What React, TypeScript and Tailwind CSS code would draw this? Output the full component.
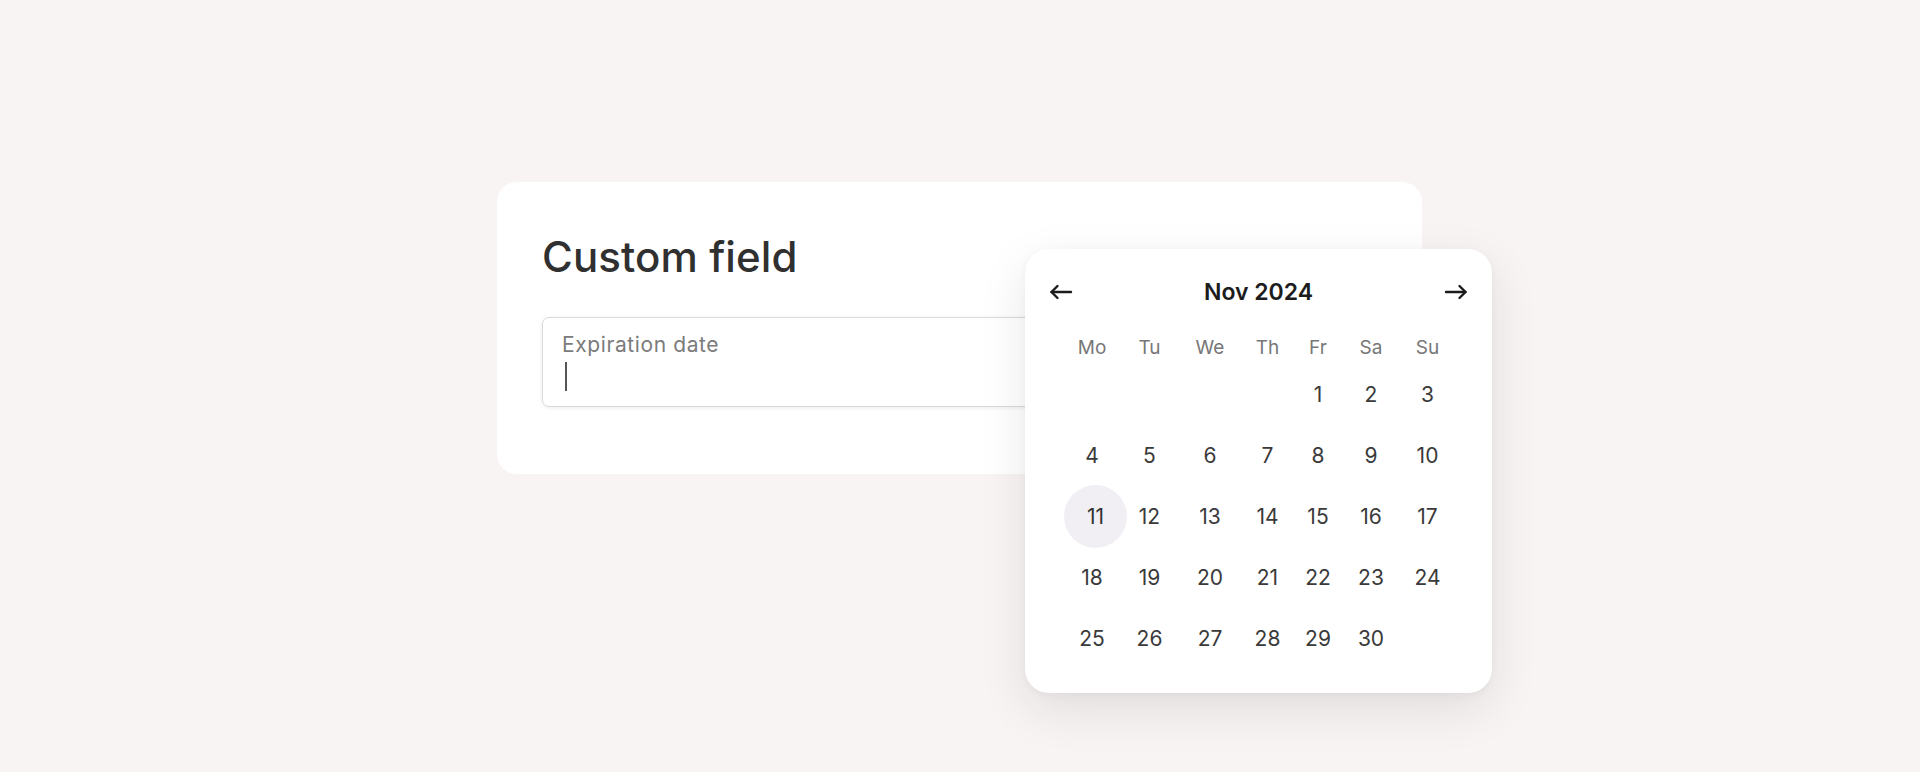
import React from "react";

const weekdays = ["Mo", "Tu", "We", "Th", "Fr", "Sa", "Su"];
const days: (number | null)[] = [
  null, null, null, null, 1, 2, 3,
  4, 5, 6, 7, 8, 9, 10,
  11, 12, 13, 14, 15, 16, 17,
  18, 19, 20, 21, 22, 23, 24,
  25, 26, 27, 28, 29, 30, null,
];

function Arrow({ dir }: { dir: "left" | "right" }) {
  return (
    <svg
      width="24"
      height="16"
      viewBox="0 0 24 16"
      fill="none"
      stroke="#1c1c1c"
      strokeWidth="2.4"
      strokeLinecap="round"
      strokeLinejoin="round"
      className={dir === "right" ? "rotate-180" : ""}
    >
      <path d="M22 8H2.5" />
      <path d="M8.5 2L2.5 8l6 6" />
    </svg>
  );
}

export default function App() {
  return (
    <div
      className="min-h-[772px] w-full bg-[#f7f4f3] pt-[182px] pl-[497px]"
      style={{ fontFamily: "Inter, 'Noto Sans', sans-serif" }}
    >
      <div className="relative w-[925px] h-[292px] rounded-[20px] bg-white pl-[45px] pr-[45px] pt-[48px]">
        <h1 className="text-[42px] leading-[54px] font-medium text-[#303030] tracking-[0.1px]">
          Custom field
        </h1>
        <div className="mt-[33px] h-[90px] rounded-[7px] border border-[#dadada] bg-white shadow-[0_1px_4px_rgba(0,0,0,0.08)] pl-[19px] pt-[13px]">
          <div className="text-[21px] leading-[28px] tracking-[0.6px] text-[#7b7b7b]">Expiration date</div>
          <div className="mt-[3px] ml-[3px] w-[2px] h-[29px] bg-[#555]" />
        </div>

        <div className="absolute left-[528px] top-[67px] w-[467px] h-[444px] rounded-[24px] bg-white shadow-[0_16px_48px_rgba(40,30,30,0.10),0_2px_8px_rgba(0,0,0,0.04)]">
          <div className="flex items-center justify-between h-[40px] mt-[23px] px-[24px]">
            <Arrow dir="left" />
            <div className="text-[23px] font-semibold text-[#1c1c1c]">Nov 2024</div>
            <Arrow dir="right" />
          </div>
          <div className="ml-[38px] mt-[20px] grid grid-cols-[58px_57px_64px_51px_50px_56px_57px]">
            {weekdays.map((w) => (
              <div
                key={w}
                className="h-[32px] flex items-center justify-center text-[19px] text-[#777]"
              >
                {w}
              </div>
            ))}
            {days.map((d, i) => (
              <div key={i} className="h-[61px] flex items-center justify-center">
                {d !== null && (
                  <span
                    className={
                      d === 11
                        ? "shrink-0 ml-[7px] w-[63px] h-[63px] rounded-full bg-[#f1eff3] flex items-center justify-center text-[21px] text-[#333]"
                        : "text-[21px] text-[#3a3a3a]"
                    }
                  >
                    {d}
                  </span>
                )}
              </div>
            ))}
          </div>
        </div>
      </div>
    </div>
  );
}
